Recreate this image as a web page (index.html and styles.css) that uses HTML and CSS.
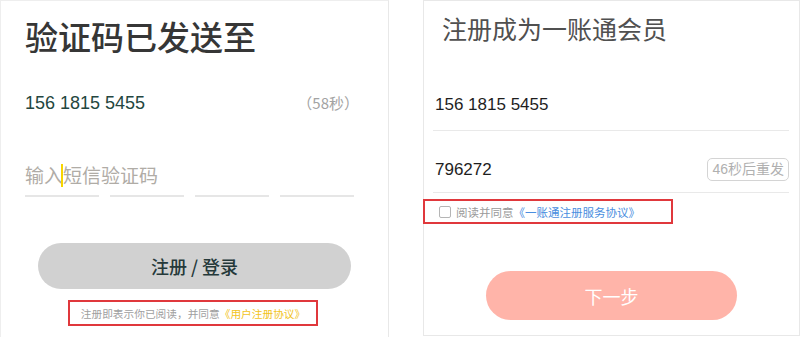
FILE: index.html
```html
<!DOCTYPE html>
<html lang="zh-CN">
<head>
<meta charset="utf-8">
<title>验证码</title>
<link rel="stylesheet" href="styles.css">
</head>
<body>
<section class="panel panel-left">
  <h1 class="title-big">验证码已发送至</h1>
  <div class="phone-row">
    <span class="phone">156 1815 5455</span>
    <span class="countdown">（58秒）</span>
  </div>
  <div class="placeholder">输入<span class="caret"></span>短信验证码</div>
  <div class="code-lines">
    <span class="code-line"></span>
    <span class="code-line"></span>
    <span class="code-line"></span>
    <span class="code-line"></span>
  </div>
  <button class="btn-gray">注册 / 登录</button>
  <div class="agree agree-left">注册即表示你已阅读，并同意<span class="link-yellow">《用户注册协议》</span></div>
</section>

<section class="panel panel-right">
  <h2 class="title-small">注册成为一账通会员</h2>
  <div class="field field-phone">156 1815 5455</div>
  <div class="field field-code">
    <span>796272</span>
    <span class="resend">46秒后重发</span>
  </div>
  <div class="agree agree-right">
    <span class="checkbox"></span>
    <span class="agree-text">阅读并同意</span><span class="link-blue">《一账通注册服务协议》</span>
  </div>
  <button class="btn-salmon">下一步</button>
</section>
</body>
</html>
```

FILE: styles.css
```css
* { box-sizing: border-box; }
html, body { margin: 0; padding: 0; }
body {
  width: 800px;
  height: 337px;
  overflow: hidden;
  display: flex;
  align-items: flex-start;
  background: #fff;
  font-family: "Liberation Sans", "Noto Sans CJK SC", sans-serif;
}
.panel {
  display: flex;
  flex-direction: column;
  align-items: flex-start;
}
.panel-left {
  width: 389px;
  height: 337px;
  border-left: 1px solid #eeeeee;
  border-top: 1px solid #eeeeee;
  border-right: 1px solid #e8e8e8;
  padding-top: 15px;
}
.title-big {
  margin: 0 0 0 24px;
  font-size: 33px;
  line-height: 40px;
  font-weight: 500;
  color: #363636;
  font-family: "Noto Sans CJK SC", sans-serif;
}
.phone-row {
  margin: 35px 0 0 24px;
  width: 334px;
  display: flex;
  justify-content: space-between;
  align-items: center;
  line-height: 24px;
}
.phone {
  font-size: 18px;
  color: #244640;
}
.countdown {
  font-size: 15px;
  color: #a3a3a3;
  font-family: "Noto Sans CJK SC", sans-serif;
}
.placeholder {
  margin: 48px 0 0 24px;
  font-size: 19px;
  line-height: 24px;
  color: #b0aca6;
  font-family: "Noto Sans CJK SC", sans-serif;
  display: flex;
  align-items: center;
}
.caret {
  display: inline-block;
  width: 2px;
  height: 23px;
  margin-left: -2px;
  background: #f7d500;
}
.code-lines {
  margin: 8px 0 0 24px;
  display: flex;
  gap: 11px;
}
.code-line {
  width: 74px;
  height: 2px;
  background: #e6e6e6;
}
.btn-gray {
  margin: 46px 0 0 37px;
  width: 313px;
  height: 46px;
  border: none;
  border-radius: 23px;
  background: #d1d1d1;
  color: #25393a;
  font-size: 18px;
  font-weight: 500;
  font-family: "Noto Sans CJK SC", sans-serif;
  padding: 0;
}
.agree {
  border: 2px solid #e0383c;
  font-family: "Noto Sans CJK SC", sans-serif;
  display: flex;
  align-items: center;
}
.agree-left {
  margin: 11px 0 0 67px;
  width: 250px;
  height: 26px;
  justify-content: center;
  font-size: 10.7px;
  color: #a0a0a0;
}
.link-yellow { color: #f2c41c; }

.panel-right {
  margin-left: 34px;
  width: 377px;
  height: 336px;
  border: 1px solid #e8e8e8;
  padding-top: 11px;
}
.title-small {
  margin: 0 0 0 18px;
  font-size: 25px;
  line-height: 32px;
  font-weight: 400;
  color: #505050;
  font-family: "Noto Sans CJK SC", sans-serif;
}
.field {
  margin-left: 9px;
  width: 356px;
  padding-left: 2px;
  border-bottom: 1px solid #e9e9e9;
  font-size: 17px;
  color: #1e1e1e;
}
.field-phone {
  margin-top: 49px;
  line-height: 24px;
  padding-bottom: 13px;
}
.field-code {
  display: flex;
  justify-content: space-between;
  align-items: center;
  padding-top: 27px;
  padding-bottom: 11px;
  height: 62px;
}
.resend {
  height: 23px;
  padding: 0 4px;
  border: 1px solid #d4d4d4;
  border-radius: 5px;
  font-size: 14px;
  line-height: 21px;
  color: #b0b0b0;
  font-family: "Liberation Sans", "Noto Sans CJK SC", sans-serif;
}
.agree-right {
  margin: 6px 0 0 -1px;
  width: 250px;
  height: 25px;
  padding-left: 14px;
  font-size: 11.5px;
  color: #9a9a9a;
}
.checkbox {
  width: 12px;
  height: 12px;
  border: 1px solid #b5b5b5;
  border-radius: 2px;
  margin-right: 5px;
}
.link-blue { color: #4a8ee0; }
.btn-salmon {
  margin: 47px 0 0 62px;
  width: 251px;
  height: 49px;
  border: none;
  border-radius: 25px;
  background: #ffb4a9;
  color: #ffffff;
  font-size: 18px;
  font-family: "Noto Sans CJK SC", sans-serif;
  padding: 0;
}
```
